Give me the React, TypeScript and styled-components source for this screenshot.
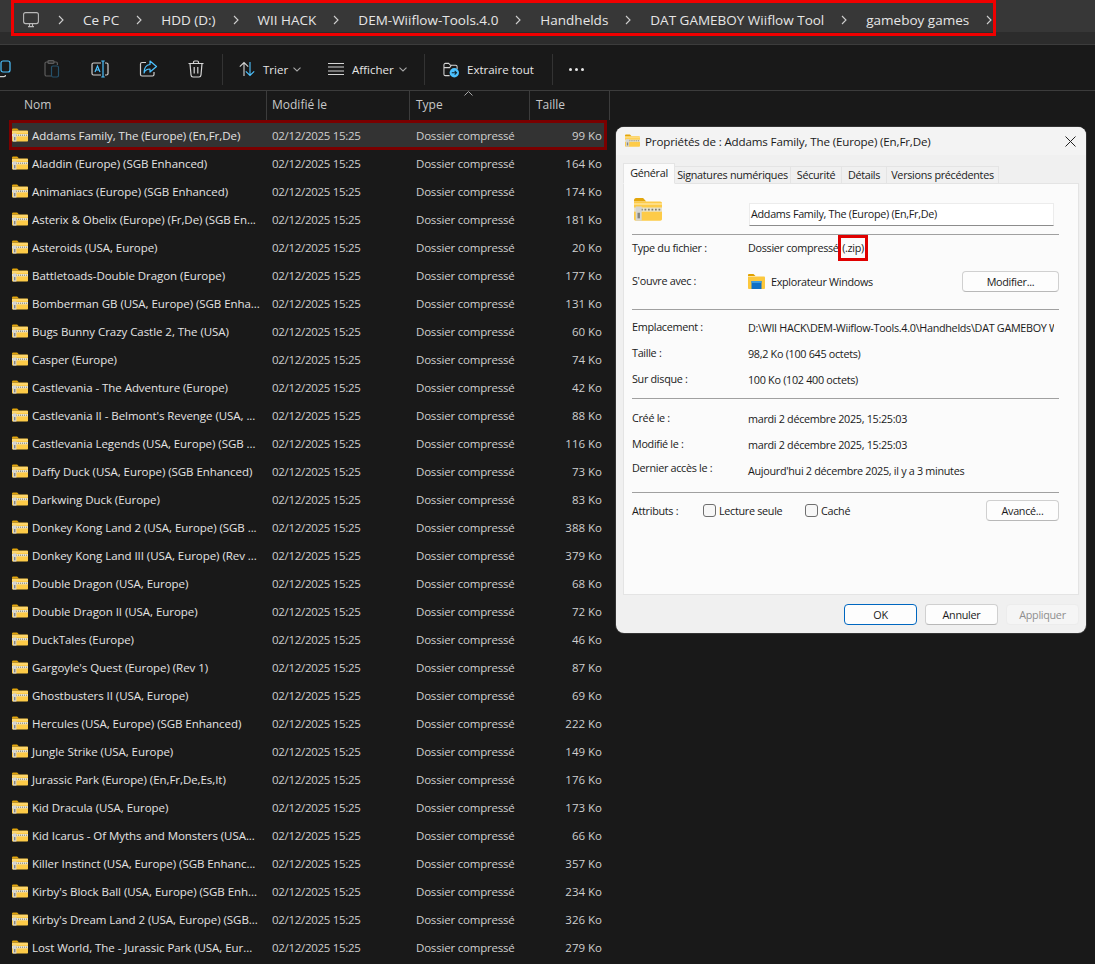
import styled, { createGlobalStyle } from "styled-components";

interface Game {
  name: string;
  size: number;
}

const games: Game[] = [
  { name: "Addams Family, The (Europe) (En,Fr,De)", size: 99 },
  { name: "Aladdin (Europe) (SGB Enhanced)", size: 164 },
  { name: "Animaniacs (Europe) (SGB Enhanced)", size: 174 },
  { name: "Asterix & Obelix (Europe) (Fr,De) (SGB En...", size: 181 },
  { name: "Asteroids (USA, Europe)", size: 20 },
  { name: "Battletoads-Double Dragon (Europe)", size: 177 },
  { name: "Bomberman GB (USA, Europe) (SGB Enha...", size: 131 },
  { name: "Bugs Bunny Crazy Castle 2, The (USA)", size: 60 },
  { name: "Casper (Europe)", size: 74 },
  { name: "Castlevania - The Adventure (Europe)", size: 42 },
  { name: "Castlevania II - Belmont's Revenge (USA, ...", size: 88 },
  { name: "Castlevania Legends (USA, Europe) (SGB ...", size: 116 },
  { name: "Daffy Duck (USA, Europe) (SGB Enhanced)", size: 73 },
  { name: "Darkwing Duck (Europe)", size: 83 },
  { name: "Donkey Kong Land 2 (USA, Europe) (SGB ...", size: 388 },
  { name: "Donkey Kong Land III (USA, Europe) (Rev ...", size: 379 },
  { name: "Double Dragon (USA, Europe)", size: 68 },
  { name: "Double Dragon II (USA, Europe)", size: 72 },
  { name: "DuckTales (Europe)", size: 46 },
  { name: "Gargoyle's Quest (Europe) (Rev 1)", size: 87 },
  { name: "Ghostbusters II (USA, Europe)", size: 69 },
  { name: "Hercules (USA, Europe) (SGB Enhanced)", size: 222 },
  { name: "Jungle Strike (USA, Europe)", size: 149 },
  { name: "Jurassic Park (Europe) (En,Fr,De,Es,It)", size: 176 },
  { name: "Kid Dracula (USA, Europe)", size: 173 },
  { name: "Kid Icarus - Of Myths and Monsters (USA...", size: 66 },
  { name: "Killer Instinct (USA, Europe) (SGB Enhanc...", size: 357 },
  { name: "Kirby's Block Ball (USA, Europe) (SGB Enh...", size: 234 },
  { name: "Kirby's Dream Land 2 (USA, Europe) (SGB...", size: 326 },
  { name: "Lost World, The - Jurassic Park (USA, Eur...", size: 279 },
];

const crumbs = [
  "Ce PC",
  "HDD (D:)",
  "WII HACK",
  "DEM-Wiiflow-Tools.4.0",
  "Handhelds",
  "DAT GAMEBOY Wiiflow Tool",
  "gameboy games",
];

const ZipFolder = ({ size = 16 }: { size?: number }) => (
  <FolderSvg width={size} height={size * 0.875} viewBox="0 0 16 14">
    <path d="M0 2C0 1 .5.500 1.200.500h4L7 2.500H0z" fill="#e3a60c" />
    <path d="M0 2.500h15c.6 0 1 .4 1 1v9c0 .6-.4 1-1 1H1c-.6 0-1-.4-1-1z" fill="#fdcb48" />
    <path d="M0 3.500h16v1H0z" fill="#ffe08c" />
    <path d="M0 6h16v2.400H0z" fill="#e9e4cf" />
    <path d="M4 7.200h12" stroke="#7d7a6c" strokeWidth="1" strokeDasharray="1 1" />
    <path d="M1 5.400h3.400v8.100H1z" fill="#d6d6d2" />
    <path d="M2 9h1.400v3.200H2z" fill="#85857f" />
  </FolderSvg>
);

const Computer = () => (
  <svg width="16" height="16" viewBox="0 0 16 16" fill="none" stroke="#b9b9b9" strokeWidth="1.100">
    <rect x="0.600" y="0.600" width="14.800" height="11" rx="2" />
    <path d="M5 14.600h6M6.500 12v2.400M9.500 12v2.400" />
  </svg>
);

const Crumb = () => (
  <svg width="6" height="10" viewBox="0 0 6 10" fill="none" stroke="#cfcfcf" strokeWidth="1.100">
    <path d="M1 1l4 4-4 4" />
  </svg>
);

const Chevron = () => (
  <ChevronSvg width="8" height="5" viewBox="0 0 8 5" fill="none" stroke="#a8a8a8" strokeWidth="1.100">
    <path d="M.5.700L4 4l3.500-3.300" />
  </ChevronSvg>
);

const CopyIcon = () => (
  <svg width="20" height="20" viewBox="0 0 20 20" fill="none" strokeWidth="1.200">
    <path d="M5 5H3.500C2.700 5 2 5.700 2 6.500V16c0 1 .7 1.600 1.500 1.600H10c.8 0 1.500-.6 1.500-1.600" stroke="#cfcfcf" />
    <rect x="7" y="2" width="9" height="11" rx="2" stroke="#4cc2ff" />
  </svg>
);

const PasteIcon = () => (
  <svg width="20" height="20" viewBox="0 0 20 20" fill="none" strokeWidth="1.200">
    <path d="M9 17H4.500C3.700 17 3 16.300 3 15.500v-11C3 3.700 3.700 3 4.500 3H14c.8 0 1.400.6 1.400 1.500V6" stroke="#5c5c5c" />
    <rect x="6" y="1.500" width="6" height="3" rx="1" stroke="#5c5c5c" />
    <rect x="9.500" y="7" width="7" height="11" rx="1.500" stroke="#25516b" />
  </svg>
);

const RenameIcon = () => (
  <svg width="20" height="20" viewBox="0 0 20 20" fill="none" strokeWidth="1.200">
    <path d="M11 4H3.500C2.700 4 2 4.700 2 5.500v9C2 15.300 2.700 16 3.500 16H11M15 4h1.500c.8 0 1.500.7 1.500 1.500v9c0 .8-.7 1.500-1.500 1.500H15" stroke="#cfcfcf" />
    <path d="M13 2v16M11.300 2h3.400M11.300 18h3.400M5 13l2.500-6L10 13M5.900 11h3.200" stroke="#4cc2ff" />
  </svg>
);

const ShareIcon = () => (
  <svg width="20" height="20" viewBox="0 0 20 20" fill="none" strokeWidth="1.200">
    <path d="M8 3.500H4C3 3.500 2.500 4.200 2.500 5v10.500c0 1 .6 1.500 1.500 1.500h10.500c.9 0 1.500-.6 1.500-1.500V13" stroke="#cfcfcf" />
    <path d="M12 2l6.500 5.500L12 13v-3c-3 0-5 1-6 4 0-5 2-8 6-8.500z" stroke="#4cc2ff" strokeLinejoin="round" />
  </svg>
);

const TrashIcon = () => (
  <svg width="20" height="20" viewBox="0 0 20 20" fill="none" stroke="#d4d4d4" strokeWidth="1.200">
    <path d="M2.500 4.500h15M7.500 4.500V3.200C7.500 2.400 8 2 8.700 2h2.600c.7 0 1.200.4 1.200 1.200v1.300M4 4.500l1 11.500c.1 1 .7 2 2 2h6c1.300 0 1.900-1 2-2l1-11.500M8.200 8v6.500M11.800 8v6.500" />
  </svg>
);

const SortIcon = () => (
  <svg width="16" height="16" viewBox="0 0 16 16" fill="none" strokeWidth="1.100">
    <path d="M5 15V1.500M.8 5.700L5 1.500l4.200 4.200" stroke="#d4d4d4" />
    <path d="M11 1v13.500M6.800 10.300l4.200 4.200 4.200-4.200" stroke="#4cc2ff" />
  </svg>
);

const ViewIcon = () => (
  <svg width="16" height="12" viewBox="0 0 16 12" fill="none" stroke="#d4d4d4" strokeWidth="1">
    <path d="M0 .5h16M0 4h16M0 8h16M0 11.500h16" />
  </svg>
);

const ExtractIcon = () => (
  <svg width="16" height="17" viewBox="0 0 17 17" fill="none">
    <path d="M7 15H2.500C1.700 15 1 14.300 1 13.500v-10C1 2.700 1.700 2 2.500 2H6l2 2h5.500c.8 0 1.500.7 1.500 1.500V8M1 6.500h6l2-2.500" stroke="#d4d4d4" strokeWidth="1.100" />
    <circle cx="12" cy="12" r="5" fill="#4cc2ff" />
    <path d="M9.300 12h5M12.400 10l2 2-2 2" stroke="#102430" strokeWidth="1.100" />
  </svg>
);

const ExplorerIcon = () => (
  <svg width="17" height="15" viewBox="0 0 17 15">
    <path d="M0 1.200C0 .5.500 0 1.200 0h4.300l2 2H0z" fill="#e0a100" />
    <path d="M0 2.500h15.800c.7 0 1.200.5 1.200 1.200v10c0 .7-.5 1.300-1.200 1.300H1.200C.5 15 0 14.400 0 13.700z" fill="#fcc83d" />
    <path d="M3.500 7h10v8h-10z" fill="#0f6fc6" />
    <path d="M3.500 7h10v2h-10z" fill="#3a9ae0" />
  </svg>
);

export default function App() {
  return (
    <Page>
      <GlobalStyle />
      <TopStrip>
        <AddressBar>
          <Crumbs>
            <Computer />
            <Sep0>
              <Crumb />
            </Sep0>
            {crumbs.map((crumb) => (
              <CrumbItem key={crumb}>
                <span>{crumb}</span>
                <Crumb />
              </CrumbItem>
            ))}
          </Crumbs>
        </AddressBar>
      </TopStrip>

      <Toolbar>
        <FirstIconButton>
          <CopyIcon />
        </FirstIconButton>
        <IconButton>
          <PasteIcon />
        </IconButton>
        <IconButton>
          <RenameIcon />
        </IconButton>
        <IconButton>
          <ShareIcon />
        </IconButton>
        <IconButton>
          <TrashIcon />
        </IconButton>
        <FirstToolSep />
        <ToolButton $width={89} $pad={16}>
          <SortIcon />
          <span>Trier</span>
          <Chevron />
        </ToolButton>
        <ToolButton $width={112} $pad={16}>
          <ViewIcon />
          <span>Afficher</span>
          <Chevron />
        </ToolButton>
        <ToolSep />
        <ToolButton $width={127} $pad={18}>
          <ExtractIcon />
          <span>Extraire tout</span>
        </ToolButton>
        <ToolSep />
        <MoreDots>
          <i />
          <i />
          <i />
        </MoreDots>
      </Toolbar>

      <ListHeader>
        <HeaderCell $width={267} $pad={24}>Nom</HeaderCell>
        <HeaderCell $width={143} $pad={5}>Modifié le</HeaderCell>
        <HeaderCell $width={120} $pad={6}>
          Type
          <SortCaret width="9" height="5" viewBox="0 0 9 5" fill="none" stroke="#a8a8a8">
            <path d="M.5 4.500l4-4 4 4" />
          </SortCaret>
        </HeaderCell>
        <HeaderCell $width={80} $pad={6}>Taille</HeaderCell>
      </ListHeader>

      <FileList>
        {games.map((game, i) => (
          <Row key={game.name} $selected={i === 0}>
            <NameCell>
              <ZipFolder />
              <span>{game.name}</span>
            </NameCell>
            <DateCell>02/12/2025 15:25</DateCell>
            <TypeCell>Dossier compressé</TypeCell>
            <SizeCell>{game.size} Ko</SizeCell>
          </Row>
        ))}
      </FileList>

      <Dialog>
        <TitleBar>
          <ZipFolder size={15} />
          <TitleText>Propriétés de : Addams Family, The (Europe) (En,Fr,De)</TitleText>
          <svg width="11" height="11" viewBox="0 0 11 11" stroke="#222" fill="none">
            <path d="M.5.500l10 10M10.500.500l-10 10" />
          </svg>
        </TitleBar>
        <Tabs>
          <Tab $active $width={52}>Général</Tab>
          <Tab $width={116}>Signatures numériques</Tab>
          <Tab $width={51}>Sécurité</Tab>
          <Tab $width={45}>Détails</Tab>
          <Tab $width={112}>Versions précédentes</Tab>
        </Tabs>
        <Panel>
          <NameRow>
            <ZipFolder size={28} />
            <NameInput>Addams Family, The (Europe) (En,Fr,De)</NameInput>
          </NameRow>
          <Divider />
          <InfoRow>
            <Label>Type du fichier :</Label>
            <div>
              Dossier compressé <Marked>(.zip)</Marked>
            </div>
          </InfoRow>
          <OpensRow>
            <Label>S'ouvre avec :</Label>
            <OpensValue>
              <ExplorerIcon />
              <span>Explorateur Windows</span>
            </OpensValue>
            <DialogButton $width={97}>Modifier...</DialogButton>
          </OpensRow>
          <Divider />
          <Group $top={4} $bottom={6}>
            <InfoRow>
              <Label>Emplacement :</Label>
              <ClippedValue>D:\WII HACK\DEM-Wiiflow-Tools.4.0\Handhelds\DAT GAMEBOY Wiiflow Tool</ClippedValue>
            </InfoRow>
            <InfoRow>
              <Label>Taille :</Label>
              <div>98,2 Ko (100 645 octets)</div>
            </InfoRow>
            <InfoRow>
              <Label>Sur disque :</Label>
              <div>100 Ko (102 400 octets)</div>
            </InfoRow>
          </Group>
          <Divider />
          <Group $top={6} $bottom={9}>
            <InfoRow>
              <Label>Créé le :</Label>
              <div>mardi 2 décembre 2025, 15:25:03</div>
            </InfoRow>
            <InfoRow>
              <Label>Modifié le :</Label>
              <div>mardi 2 décembre 2025, 15:25:03</div>
            </InfoRow>
            <InfoRow>
              <Label $raised>Dernier accès le :</Label>
              <div>Aujourd'hui 2 décembre 2025, il y a 3 minutes</div>
            </InfoRow>
          </Group>
          <Divider />
          <AttrRow>
            <AttrLabel>Attributs :</AttrLabel>
            <Check $width={102}>
              <i />
              Lecture seule
            </Check>
            <Check $width={181}>
              <i />
              Caché
            </Check>
            <DialogButton $width={73}>Avancé...</DialogButton>
          </AttrRow>
        </Panel>
        <Footer>
          <DialogButton $width={73} $primary>OK</DialogButton>
          <DialogButton $width={73}>Annuler</DialogButton>
          <DialogButton $width={73} $disabled>Appliquer</DialogButton>
        </Footer>
      </Dialog>
    </Page>
  );
}

const GlobalStyle = createGlobalStyle`
  html, body {
    margin: 0;
    padding: 0;
    background: #191919;
  }
  * {
    box-sizing: border-box;
  }
`;

const Page = styled.div`
  position: relative;
  width: 1095px;
  height: 964px;
  overflow: hidden;
  background: #191919;
  font-family: "Open Sans", "Noto Sans", sans-serif;
`;

const FolderSvg = styled.svg`
  flex: none;
`;

const ChevronSvg = styled.svg`
  margin-left: -3px;
`;

const TopStrip = styled.div`
  height: 45px;
  padding-top: 4px;
  background: #2c2c2c;
  border-bottom: 1px solid #3c3c3c;
`;

const AddressBar = styled.div`
  height: 32px;
  background: #373737;
`;

const Crumbs = styled.div`
  display: flex;
  align-items: center;
  width: 985px;
  height: 36px;
  margin: -4px 0 0 11px;
  padding: 3px 0 0 9px;
  border: 3px solid #f00000;
  color: #e6e6e6;
  font-size: 13.500px;
`;

const Sep0 = styled.div`
  display: flex;
  margin-left: 19px;
`;

const CrumbItem = styled.div`
  display: flex;
  align-items: center;
  gap: 17px;
  margin-left: 19px;
`;

const Toolbar = styled.div`
  display: flex;
  align-items: center;
  height: 46px;
  padding-top: 3px;
  border-bottom: 1px solid #3c3c3c;
  color: #e6e6e6;
  font-size: 11.500px;
`;

const IconButton = styled.div`
  display: flex;
  align-items: center;
  justify-content: center;
  flex: none;
  width: 48px;
`;

const FirstIconButton = styled(IconButton)`
  margin-left: -20px;
`;

const ToolSep = styled.div`
  flex: none;
  width: 1px;
  height: 31px;
  background: #333;
`;

const FirstToolSep = styled(ToolSep)`
  margin-left: 2px;
`;

const ToolButton = styled.div<{ $width: number; $pad: number }>`
  display: flex;
  flex: none;
  align-items: center;
  gap: 8px;
  width: ${(p) => p.$width}px;
  padding-left: ${(p) => p.$pad}px;
`;

const MoreDots = styled.div`
  display: flex;
  gap: 3px;
  margin-left: 16px;

  i {
    width: 3px;
    height: 3px;
    border-radius: 50%;
    background: #e6e6e6;
  }
`;

const ListHeader = styled.div`
  display: flex;
  height: 30px;
  color: #c8c8c8;
  font-size: 12px;
`;

const HeaderCell = styled.div<{ $width: number; $pad: number }>`
  position: relative;
  display: flex;
  align-items: center;
  width: ${(p) => p.$width}px;
  height: 29px;
  padding: 0 0 3px ${(p) => p.$pad}px;
  border-right: 1px solid #3c3c3c;
`;

const SortCaret = styled.svg`
  position: absolute;
  top: 0;
  left: 54px;
`;

const FileList = styled.div`
  display: flex;
  flex-direction: column;
`;

const Row = styled.div<{ $selected?: boolean }>`
  display: grid;
  grid-template-columns: 256px 144px 112px 84px;
  align-items: center;
  flex: none;
  width: 596px;
  height: 28px;
  margin-left: 10px;
  background: ${(p) => (p.$selected ? "#333333" : "transparent")};
  outline: ${(p) => (p.$selected ? "3px solid #7a0000" : "none")};
  outline-offset: -2px;
  color: #e4e4e4;
  font-size: 11.500px;
  white-space: nowrap;
`;

const NameCell = styled.div`
  display: flex;
  align-items: center;
  gap: 4px;
  padding-left: 2px;
  letter-spacing: -0.05px;
`;

const DateCell = styled.div`
  padding-left: 6px;
  color: #cfcfcf;
  letter-spacing: -0.3px;
`;

const TypeCell = styled(DateCell)`
  letter-spacing: -0.2px;
`;

const SizeCell = styled(DateCell)`
  padding: 0 4px 0 0;
  text-align: right;
  letter-spacing: 0;
`;

const Dialog = styled.div`
  position: absolute;
  top: 127px;
  left: 616px;
  width: 470px;
  height: 506px;
  padding: 0 7px;
  border-radius: 8px;
  background: #f0f0f0;
  box-shadow: 0 0 0 1px #333;
  color: #1a1a1a;
  font-size: 10.800px;
  letter-spacing: -0.3px;
`;

const TitleBar = styled.div`
  display: flex;
  align-items: center;
  height: 28px;
  margin: 0 -7px;
  padding: 0 10px 0 9px;
  gap: 5px;
  background: #f3f3f3;
  border-radius: 8px 8px 0 0;
  font-size: 11.600px;
  letter-spacing: -0.15px;
`;

const TitleText = styled.span`
  flex: 1;
`;

const Tabs = styled.div`
  display: flex;
  align-items: flex-end;
  height: 29px;
  margin-bottom: -1px;
`;

const Tab = styled.div<{ $active?: boolean; $width: number }>`
  display: flex;
  align-items: center;
  justify-content: center;
  position: relative;
  width: ${(p) => p.$width}px;
  height: ${(p) => (p.$active ? 21 : 18)}px;
  padding-bottom: 2px;
  background: ${(p) => (p.$active ? "#fbfbfb" : "#f0f0f0")};
  border: 1px solid #e4e4e4;
  border-bottom: ${(p) => (p.$active ? "1px solid #fbfbfb" : "1px solid #e4e4e4")};
  border-left: ${(p) => (p.$active ? "1px solid #e4e4e4" : "none")};
  white-space: nowrap;
`;

const Panel = styled.div`
  height: 412px;
  padding: 13px 19px 0 8px;
  background: #fbfbfb;
  border: 1px solid #e4e4e4;
`;

const NameRow = styled.div`
  display: flex;
  align-items: flex-start;
  gap: 87px;
  height: 37px;
  padding-left: 2px;
`;

const NameInput = styled.div`
  flex: none;
  width: 305px;
  height: 23px;
  margin-top: 6px;
  padding: 0 1px;
  line-height: 20px;
  background: #fff;
  border: 1px solid #ececec;
  border-bottom: 1px solid #8c8c8c;
  white-space: nowrap;
`;

const Divider = styled.div`
  height: 1px;
  background: #a0a0a0;
`;

const InfoRow = styled.div`
  display: grid;
  grid-template-columns: 116px 1fr;
  align-items: center;
  height: 26px;
  white-space: nowrap;
`;

const OpensRow = styled.div`
  display: flex;
  align-items: center;
  height: 26px;
  margin: 7px 0 15px;
  white-space: nowrap;
`;

const Label = styled.div<{ $raised?: boolean }>`
  flex: none;
  width: 116px;
  padding-bottom: ${(p) => (p.$raised ? 6 : 2)}px;
`;

const ClippedValue = styled.div`
  overflow: hidden;
  width: 306px;
`;

const OpensValue = styled.div`
  display: flex;
  align-items: center;
  flex: 1;
  gap: 6px;
`;

const Marked = styled.span`
  display: inline-block;
  padding: 2px 1px;
  line-height: 16px;
  outline: 3px solid #e00000;
`;

const Group = styled.div<{ $top: number; $bottom: number }>`
  padding: ${(p) => p.$top}px 0 ${(p) => p.$bottom}px;
`;

const AttrRow = styled.div`
  display: flex;
  align-items: center;
  height: 26px;
  margin-top: 4px;
  white-space: nowrap;
`;

const AttrLabel = styled.div`
  flex: none;
  width: 71px;
`;

const Check = styled.div<{ $width: number }>`
  display: flex;
  flex: none;
  align-items: center;
  gap: 3px;
  width: ${(p) => p.$width}px;

  i {
    width: 13px;
    height: 13px;
    border: 1px solid #6f6f6f;
    border-radius: 3px;
    background: #f7f7f7;
  }
`;

const DialogButton = styled.div<{ $width: number; $primary?: boolean; $disabled?: boolean }>`
  display: flex;
  flex: none;
  align-items: center;
  justify-content: center;
  width: ${(p) => p.$width}px;
  height: 21px;
  border: ${(p) =>
    p.$primary ? "1.5px solid #0067c0" : p.$disabled ? "1px solid #ececec" : "1px solid #d0d0d0"};
  border-bottom-color: ${(p) => (p.$primary ? "#0067c0" : p.$disabled ? "#ececec" : "#b8b8b8")};
  border-radius: 4px;
  background: ${(p) => (p.$disabled ? "#f5f5f5" : "#fdfdfd")};
  color: ${(p) => (p.$disabled ? "#8f8f8f" : "#1a1a1a")};
`;

const Footer = styled.div`
  display: flex;
  justify-content: flex-end;
  gap: 8px;
  padding-top: 9px;
`;
